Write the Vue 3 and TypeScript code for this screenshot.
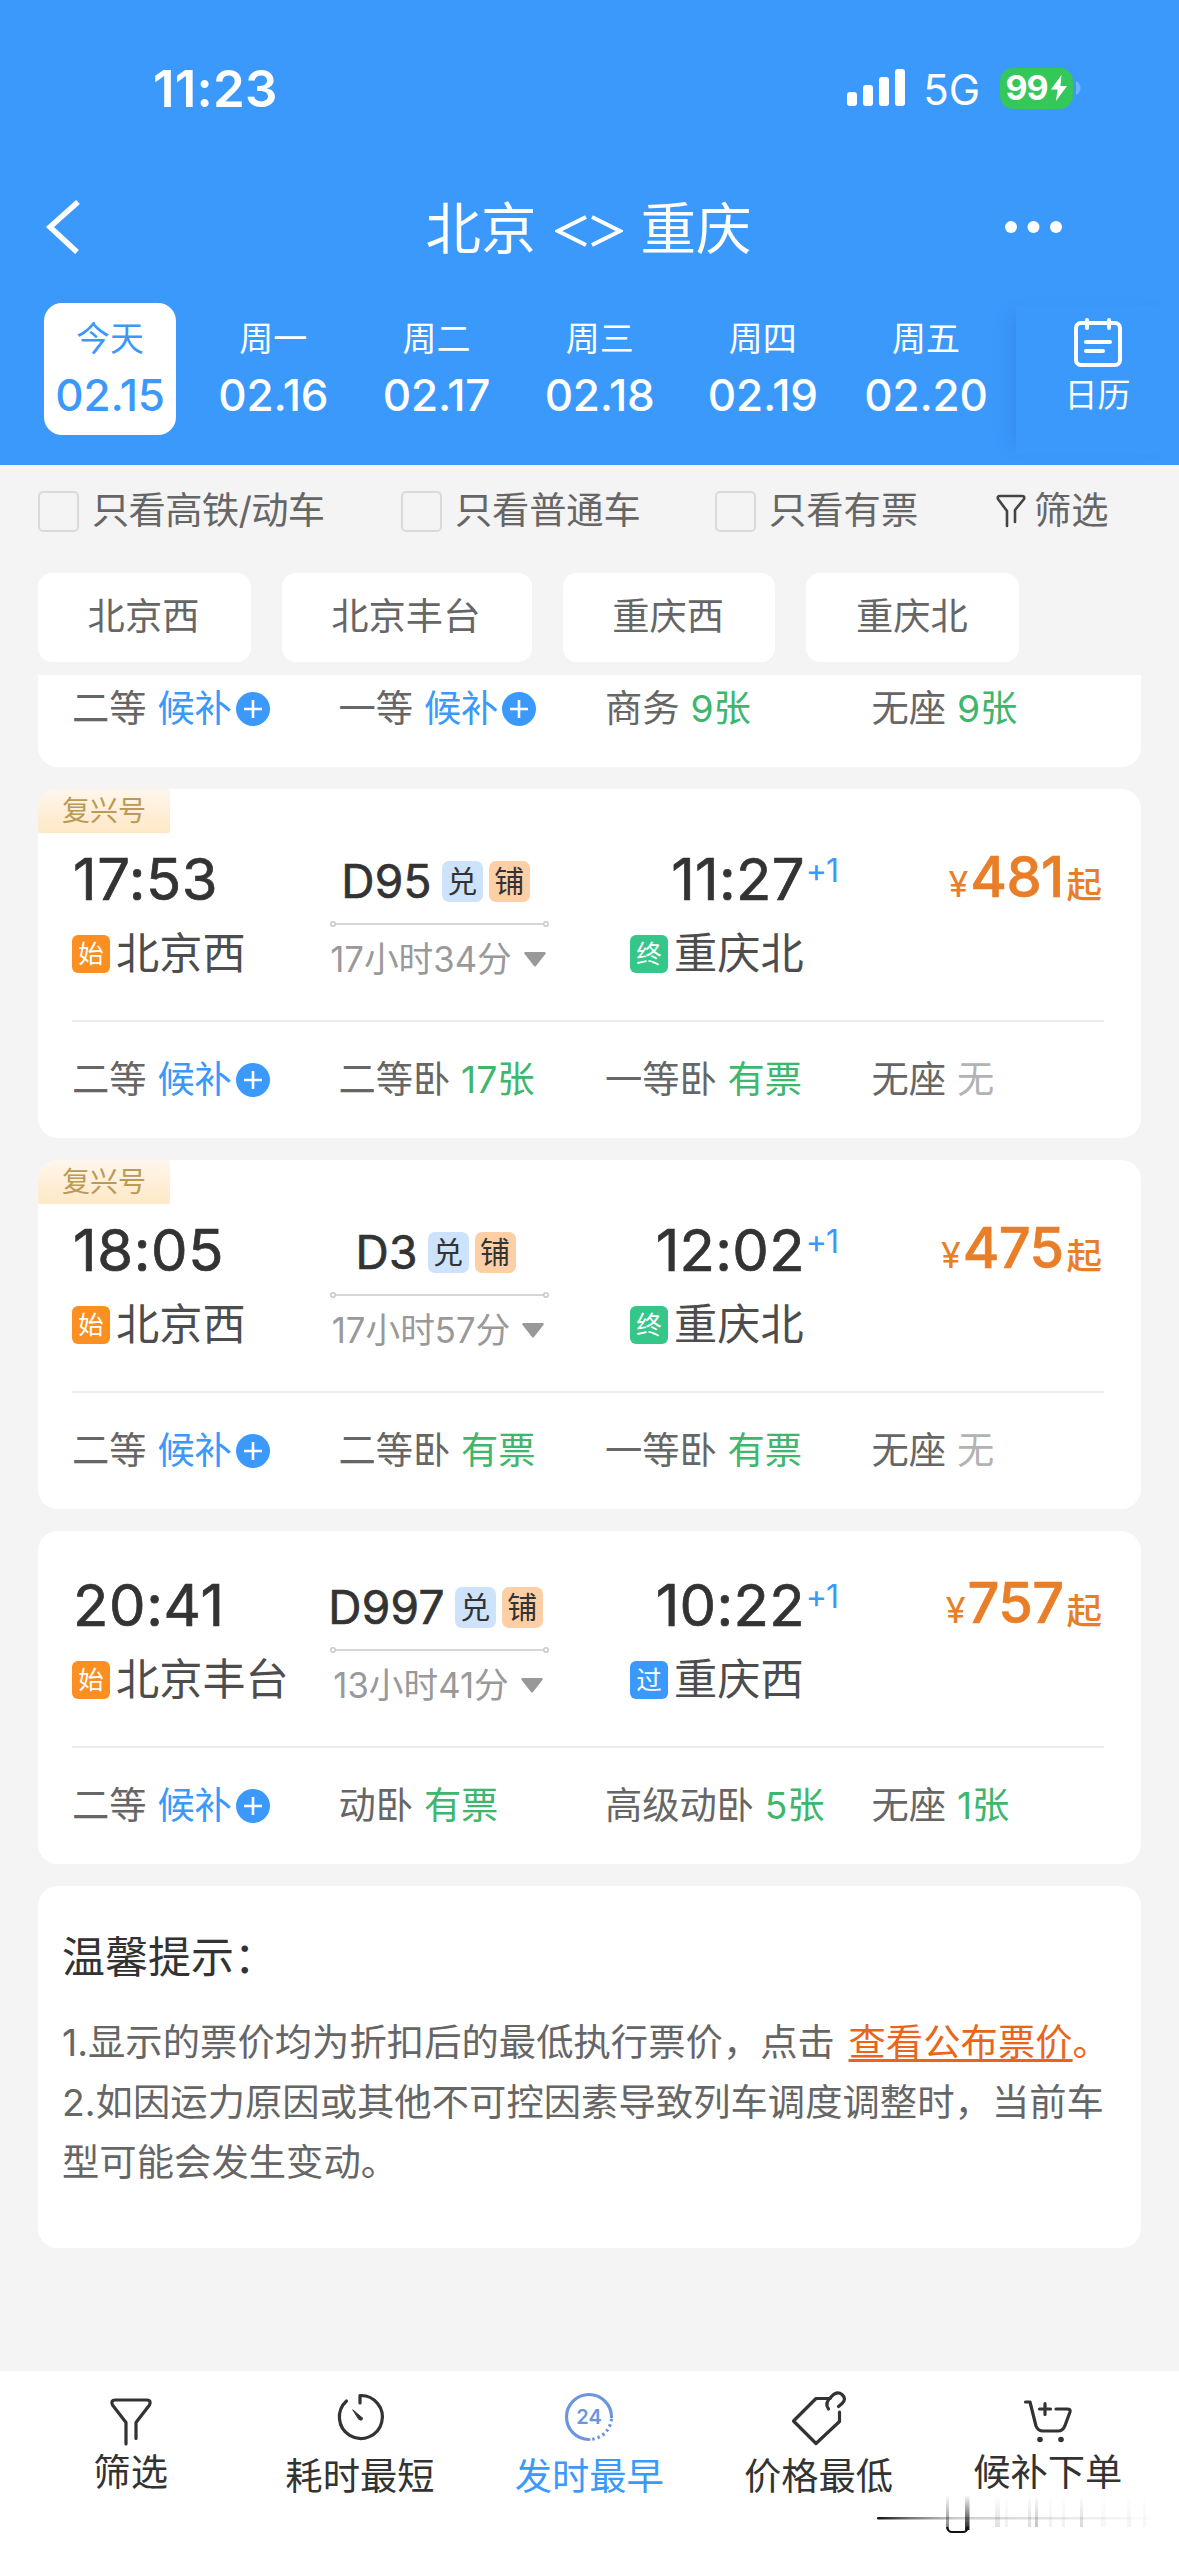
<script setup lang="ts">
interface Day { label: string; date: string }
interface Seat { name: string; value: string; kind: 'wait' | 'ok' | 'none' }
interface Train {
  fuxing: boolean
  depart: string
  from: string
  code: string
  duration: string
  arrive: string
  mark: '终' | '过'
  to: string
  price: string
  seats: Seat[]
}

const days: Day[] = [
  { label: '今天', date: '02.15' },
  { label: '周一', date: '02.16' },
  { label: '周二', date: '02.17' },
  { label: '周三', date: '02.18' },
  { label: '周四', date: '02.19' },
  { label: '周五', date: '02.20' },
]
const toggles: string[] = ['只看高铁/动车', '只看普通车', '只看有票']
const stations: string[] = ['北京西', '北京丰台', '重庆西', '重庆北']

const partial: Seat[] = [
  { name: '二等', value: '候补', kind: 'wait' },
  { name: '一等', value: '候补', kind: 'wait' },
  { name: '商务', value: '9张', kind: 'ok' },
  { name: '无座', value: '9张', kind: 'ok' },
]

const trains: Train[] = [
  {
    fuxing: true, depart: '17:53', from: '北京西', code: 'D95', duration: '17小时34分',
    arrive: '11:27', mark: '终', to: '重庆北', price: '481',
    seats: [
      { name: '二等', value: '候补', kind: 'wait' },
      { name: '二等卧', value: '17张', kind: 'ok' },
      { name: '一等卧', value: '有票', kind: 'ok' },
      { name: '无座', value: '无', kind: 'none' },
    ],
  },
  {
    fuxing: true, depart: '18:05', from: '北京西', code: 'D3', duration: '17小时57分',
    arrive: '12:02', mark: '终', to: '重庆北', price: '475',
    seats: [
      { name: '二等', value: '候补', kind: 'wait' },
      { name: '二等卧', value: '有票', kind: 'ok' },
      { name: '一等卧', value: '有票', kind: 'ok' },
      { name: '无座', value: '无', kind: 'none' },
    ],
  },
  {
    fuxing: false, depart: '20:41', from: '北京丰台', code: 'D997', duration: '13小时41分',
    arrive: '10:22', mark: '过', to: '重庆西', price: '757',
    seats: [
      { name: '二等', value: '候补', kind: 'wait' },
      { name: '动卧', value: '有票', kind: 'ok' },
      { name: '高级动卧', value: '5张', kind: 'ok' },
      { name: '无座', value: '1张', kind: 'ok' },
    ],
  },
]
</script>

<template>
  <div class="page">
    <header class="head">
      <div class="status">
        <span class="clock">11:23</span>
        <div class="status-right">
          <svg class="signal" width="58" height="38" viewBox="0 0 58 38" fill="#fff">
            <rect x="0" y="23" width="10" height="14" rx="3" />
            <rect x="16" y="16" width="10" height="21" rx="3" />
            <rect x="32" y="8" width="10" height="29" rx="3" />
            <rect x="48" y="0" width="10" height="37" rx="3" />
          </svg>
          <span class="net">5G</span>
          <span class="battery">
            <span class="pct">99</span>
            <svg width="18" height="26" viewBox="0 0 18 26" fill="#fff"><path d="M11.500 0 1 14.500h6.500L6 26 17 11h-6.600z" /></svg>
          </span>
          <svg class="nub" width="5" height="14" viewBox="0 0 5 14"><path d="M0 0c6 3 6 11 0 14z" fill="#6db4fd" /></svg>
        </div>
      </div>

      <div class="nav">
        <svg class="back" width="36" height="54" viewBox="0 0 36 54" fill="none" stroke="#fff" stroke-width="5.500"><path d="M33 2 5 27l27 25" /></svg>
        <h1>北京 <svg class="swap" width="68" height="34" viewBox="0 0 68 34" fill="none" stroke="#fff" stroke-width="4"><path d="M31 3 3 17l28 14M37 3l28 14-28 14" /></svg> 重庆</h1>
        <svg class="more" width="60" height="14" viewBox="0 0 60 14" fill="#fff"><circle cx="7" cy="7" r="6" /><circle cx="29.500" cy="7" r="6" /><circle cx="52" cy="7" r="6" /></svg>
      </div>

      <div class="dates">
        <div class="days">
          <div v-for="(d, i) in days" :key="d.date" class="day" :class="{ on: i === 0 }">
            <span class="dow">{{ d.label }}</span>
            <span class="dm">{{ d.date }}</span>
          </div>
        </div>
        <div class="cal">
          <svg width="48" height="50" viewBox="0 0 48 50" fill="none" stroke="#fff" stroke-width="4" stroke-linecap="round">
            <rect x="2" y="5" width="44" height="42" rx="5" />
            <path d="M13 2v8M35 2v8M12 24h24M12 33h17" />
          </svg>
          <span>日历</span>
        </div>
      </div>
    </header>

    <section class="filters">
      <label v-for="t in toggles" :key="t" class="toggle"><i class="box" />{{ t }}</label>
      <span class="pick">
        <svg width="30" height="34" viewBox="0 0 30 34" fill="none" stroke="#444" stroke-width="2.600" stroke-linecap="round" stroke-linejoin="round"><path d="M11 32V17L2 5Q1 2 4 2H26Q29 2 28 5L19 16V28" /></svg>筛选
      </span>
    </section>

    <section class="stations">
      <span v-for="s in stations" :key="s" class="chip">{{ s }}</span>
    </section>

    <main class="list">
      <article class="card cut">
        <div class="seats">
          <div v-for="s in partial" :key="s.name" class="seat">
            <span>{{ s.name }}</span><span :class="s.kind">{{ s.value }}</span>
            <svg v-if="s.kind === 'wait'" class="plus" width="34" height="34" viewBox="0 0 34 34"><circle cx="17" cy="17" r="17" fill="#3b99fc" /><path d="M17 8v18M8 17h18" stroke="#fff" stroke-width="2.600" /></svg>
          </div>
        </div>
      </article>

      <article v-for="t in trains" :key="t.code" class="card" :class="{ fx: t.fuxing }">
        <span v-if="t.fuxing" class="ribbon">复兴号</span>
        <div class="trip">
          <div class="dep">
            <div class="time">{{ t.depart }}</div>
            <div class="place"><b class="mark start">始</b>{{ t.from }}</div>
          </div>
          <div class="mid">
            <div class="code"><span>{{ t.code }}</span><b class="tag blue">兑</b><b class="tag orange">铺</b></div>
            <svg class="rail" width="219" height="12" viewBox="0 0 219 12" fill="#fff" stroke="#c8c8c8" stroke-width="1.500"><path d="M5 6H214" /><circle cx="3" cy="6" r="2.200" /><circle cx="216" cy="6" r="2.200" /></svg>
            <div class="dur"><span>{{ t.duration }}</span><svg width="22" height="15" viewBox="0 0 22 15" fill="#999"><path d="M1 0h20q1.500 1 0 2.500L12 14q-1 1-2 0L1 2.500Q-.5 1 1 0z" /></svg></div>
          </div>
          <div class="arr">
            <div class="time end">{{ t.arrive }}<sup>+1</sup></div>
            <div class="place"><b class="mark" :class="t.mark === '终' ? 'final' : 'pass'">{{ t.mark }}</b>{{ t.to }}</div>
          </div>
          <div class="price"><small>¥</small><strong>{{ t.price }}</strong><em>起</em></div>
        </div>
        <div class="seats">
          <div v-for="s in t.seats" :key="s.name" class="seat">
            <span>{{ s.name }}</span><span :class="s.kind">{{ s.value }}</span>
            <svg v-if="s.kind === 'wait'" class="plus" width="34" height="34" viewBox="0 0 34 34"><circle cx="17" cy="17" r="17" fill="#3b99fc" /><path d="M17 8v18M8 17h18" stroke="#fff" stroke-width="2.600" /></svg>
          </div>
        </div>
      </article>

      <article class="card notice">
        <h2>温馨提示：</h2>
        <p>1.显示的票价均为折扣后的最低执行票价，点击 <a><u>查看公布票价</u>。</a></p>
        <p>2.如因运力原因或其他不可控因素导致列车调度调整时，当前车<br>型可能会发生变动。</p>
      </article>
    </main>

    <footer class="tabs">
      <div class="tab">
        <svg width="54" height="56" viewBox="0 0 54 56"><path d="M22 48V26.500L8.500 9Q6.500 4 11 4H43Q47.500 4 45.500 9L32 26.500V42.500" /></svg>
        <span>筛选</span>
      </div>
      <div class="tab low">
        <svg width="54" height="56" viewBox="0 0 54 56"><path d="M27 9V1.500A21.500 21.500 0 1 1 13.500 7" /><path d="M20 16 30 24.500Q28.500 27.500 26 25.500Z" fill="#333" stroke-width="1" /></svg>
        <span>耗时最短</span>
      </div>
      <div class="tab low on">
        <svg width="54" height="56" viewBox="0 0 54 56">
          <path d="M49.500 23A22.500 22.500 0 1 0 27 45.500" />
          <path d="M49.500 25A22.500 22.500 0 0 1 29 45.400" stroke-dasharray="2.500 3" stroke-linecap="butt" />
          <text x="27" y="30" text-anchor="middle">24</text>
        </svg>
        <span>发时最早</span>
      </div>
      <div class="tab low">
        <svg width="54" height="56" viewBox="0 0 54 56"><path d="M38 4.500H24L1.500 27 24 49.500 47.500 27.500V18" /><path d="M36.500 15C33 10.500 35 6.500 39.500 2.500Q45-3.500 50 .5Q55 5 50 9.500L46.500 12.500" /></svg>
        <span>价格最低</span>
      </div>
      <div class="tab">
        <svg width="54" height="56" viewBox="0 0 54 56"><path d="M4.500 6H9L15 30Q17 35 22 35H37Q42 35 44 29.500L49 16Q50 13 46 13H35M24 7.500v11M18.500 13h11" /><circle cx="19" cy="43.500" r="2.800" fill="#333" stroke="none" /><circle cx="40" cy="43.500" r="2.800" fill="#333" stroke="none" /></svg>
        <span>候补下单</span>
      </div>
      <svg class="streak" width="290" height="46" viewBox="0 0 290 46">
        <defs>
          <linearGradient id="h"><stop offset="0" stop-color="#111" /><stop offset=".12" stop-color="#777" /><stop offset=".28" stop-color="#ccc" /><stop offset="1" stop-color="#fff" /></linearGradient>
          <linearGradient id="v" x2="0" y2="1"><stop offset="0" stop-color="#111" stop-opacity="0" /><stop offset="1" stop-color="#111" /></linearGradient>
        </defs>
        <rect x="0" y="22" width="280" height="2.400" rx="1.200" fill="url(#h)" />
        <rect x="69" y="0" width="3" height="34" fill="url(#v)" opacity=".55" />
        <rect x="88" y="0" width="4.500" height="35" fill="url(#v)" opacity=".95" />
        <path d="M70 32q1 5 5 5h11q4 0 5-5" fill="none" stroke="#111" stroke-width="2" />
        <g fill="url(#v)">
          <rect x="118" y="0" width="5" height="32" opacity=".13" />
          <rect x="128" y="0" width="3" height="32" opacity=".06" />
          <rect x="151" y="0" width="3" height="32" opacity=".15" />
          <rect x="158" y="0" width="3" height="32" opacity=".25" />
          <rect x="172" y="0" width="3" height="32" opacity=".06" />
          <rect x="185" y="0" width="3" height="32" opacity=".06" />
          <rect x="203" y="0" width="3" height="32" opacity=".16" />
          <rect x="224" y="0" width="5" height="32" opacity=".04" />
          <rect x="250" y="0" width="4" height="32" opacity=".05" />
          <rect x="266" y="0" width="3" height="32" opacity=".04" />
        </g>
      </svg>
    </footer>
  </div>
</template>

<style>
body { background: #f4f4f4; }
</style>

<style scoped>
.page {
  width: 1179px; height: 2556px; overflow: hidden; box-sizing: border-box;
  display: flex; flex-direction: column; background: #f4f4f4; color: #666;
  font-family: Inter, "Noto Sans CJK SC", sans-serif; font-size: 37.300px; line-height: 1;
}
svg { flex: none; display: block; }
.head { height: 465px; background: #3b99fc; color: #fff; display: flex; flex-direction: column; flex: none; }
.status { height: 176px; display: flex; align-items: center; justify-content: space-between; padding: 0 98px 0 153px; box-sizing: border-box; }
.clock { font-size: 51px; font-weight: 600; letter-spacing: 0.200px; }
.status-right { display: flex; align-items: center; }
.net { font-size: 42px; margin: 3px 20px 0 18px; }
.battery { width: 73px; height: 41px; border-radius: 13px; background: #34c759; display: flex; align-items: center; justify-content: center; gap: 2px; }
.pct { font-size: 34px; font-weight: 700; letter-spacing: -1px; }
.nub { margin-left: 3px; }
.nav { height: 102px; display: grid; grid-template-columns: 200px 1fr 200px; align-items: center; }
.back { margin-left: 45px; }
.nav h1 { margin: 4px 0 0 -2px; font-size: 55.500px; font-weight: 400; display: flex; justify-content: center; align-items: center; gap: 18px; line-height: 80px; }
.swap { margin-top: 3px; }
.more { margin-left: 25px; }
.dates { height: 187px; display: flex; padding-left: 28.500px; }
.days { display: flex; width: 987.500px; }
.day { width: 132px; height: 132px; margin: 25px 15.600px 0; display: flex; flex-direction: column; align-items: center; border-radius: 18px; flex: none; }
.day.on { background: #fff; color: #4a96df; }
.dow { font-size: 34px; line-height: 40px; margin-top: 16px; }
.dm { font-size: 44px; font-weight: 500; letter-spacing: -0.200px; line-height: 50px; margin-top: 11px; white-space: nowrap; }
.cal { flex: 1; height: 148px; margin-top: 28px; display: flex; flex-direction: column; align-items: center; font-size: 33px; box-shadow: -14px 0 16px -8px rgba(30, 90, 170, .18); }
.cal svg { margin-top: 12px; }
.cal span { line-height: 40px; margin-top: 7px; }
.filters { height: 92px; flex: none; display: flex; align-items: center; padding-left: 38px; }
.toggle { display: flex; align-items: center; white-space: nowrap; margin-right: 75px; line-height: 44px; flex: none; }
.toggle:nth-child(1) { width: 288px; letter-spacing: -0.700px; }
.toggle:nth-child(2) { width: 239px; letter-spacing: -0.200px; }
.toggle:nth-child(3) { width: 206px; }
.box { flex: none; width: 37px; height: 37px; border: 2px solid #dadada; border-radius: 5px; margin-right: 13px; }
.pick { display: flex; align-items: center; gap: 8px; white-space: nowrap; }
.stations { display: flex; gap: 31px; padding: 16px 38px 0; flex: none; height: 102px; }
.chip { height: 89px; line-height: 87px; padding: 0 51.200px 0 49.600px; background: #fff; border-radius: 14px; }
.list { padding: 0 38px; flex: 1; display: flex; flex-direction: column; gap: 22px; }
.card { position: relative; background: #fff; border-radius: 20px; flex: none; }
.cut { height: 92px; border-radius: 0 0 20px 20px; }
.cut .seats { height: 68px; border: 0; }
.ribbon { position: absolute; left: 0; top: 0; width: 132px; height: 44px; line-height: 44px; box-sizing: border-box; padding-left: 24px; font-size: 28px; color: #bb9a55; white-space: nowrap; background: linear-gradient(#fff6ec, #fee8c6); border-radius: 20px 2px 2px 2px; }
.trip { display: grid; grid-template-columns: 258px 219px 289px 1fr; margin: 0 37px 0 34px; height: 215px; padding-top: 44px; box-sizing: border-box; }
.fx .trip { height: 231px; padding-top: 60px; }
.arr { margin-left: 81px; width: 208px; }
.time { height: 60px; line-height: 60px; font-size: 58px; color: #333; font-weight: 400; letter-spacing: 0.600px; white-space: nowrap; -webkit-text-stroke: 0.700px #333; }
.dep .time { padding-left: 1px; }
.end { display: flex; justify-content: flex-end; letter-spacing: 0.300px; }
.time sup { font-size: 32px; line-height: 44px; color: #3b99fc; font-weight: 400; margin-left: 1px; letter-spacing: -1px; -webkit-text-stroke: 0; }
.place { height: 60px; margin-top: 15px; display: flex; align-items: center; font-size: 43.200px; color: #4d4d4d; white-space: nowrap; }
.mark { width: 38px; height: 38px; border-radius: 6px; font-size: 25.500px; line-height: 37px; text-align: center; color: #fff; font-weight: 400; margin-right: 6px; }
.start { background: #fb8f22; }
.final { background: #35c68a; }
.pass { background: #3b99fc; }
.mid { display: flex; flex-direction: column; align-items: center; }
.code { height: 64px; display: flex; align-items: center; color: #333; font-size: 46px; font-weight: 400; margin-left: -8px; }
.code span { -webkit-text-stroke: 0.700px #333; letter-spacing: 0.300px; }
.tag { width: 41px; height: 41px; border-radius: 7px; line-height: 40px; text-align: center; font-size: 30px; font-weight: 400; margin-left: 6px; }
.blue { background: #cde3fc; margin-left: 10px; }
.orange { background: #fdcfa6; }
.rail { margin-top: 5px; }
.dur { height: 40px; margin: 9px 0 0 -3px; display: flex; align-items: center; font-size: 34.700px; color: #999; white-space: nowrap; gap: 12px; }
.price { height: 60px; display: flex; justify-content: flex-end; align-items: baseline; color: #e97e29; white-space: nowrap; line-height: 56px; margin-right: 2px; }
.price small { font-size: 36px; }
.price strong { font-size: 56px; font-weight: 500; letter-spacing: -0.700px; margin: 0 3px 0 2px; -webkit-text-stroke: 0.600px #e97e29; }
.price em { font-style: normal; font-weight: 500; font-size: 35.500px; position: relative; top: 1px; }
.seats { display: grid; grid-template-columns: 266.500px 266.500px 266.500px 1fr; margin: 0 37px 0 34px; height: 117px; box-sizing: border-box; border-top: 2px solid #ececec; }
.card:not(.cut) .seats { margin-bottom: 1px; }
.seat { display: flex; align-items: center; white-space: nowrap; letter-spacing: -0.100px; }
.seat span + span { margin-left: 11px; }
.wait { color: #3b99fc; }
.ok { color: #3eb66c; }
.none { color: #b3b3b3; }
.plus { margin-left: 4px; }
.notice { height: 362px; box-sizing: border-box; padding: 41px 0 0 24px; }
.notice h2 { margin: 0 0 26px; font-size: 43px; line-height: 60px; font-weight: 400; color: #333; }
.notice p { margin: 0; line-height: 60px; white-space: nowrap; word-spacing: 3px; letter-spacing: 0.050px; }
.notice a { color: #e8651b; }
.notice u { text-decoration-thickness: 3px; text-underline-offset: 3px; }
.tabs { position: relative; height: 185px; flex: none; background: #fff; display: grid; grid-template-columns: repeat(5, 229.300px); padding-left: 16px; box-sizing: border-box; color: #333; }
.tab { display: flex; flex-direction: column; align-items: center; padding-top: 25px; line-height: 46px; }
.tab svg { fill: none; stroke: #333; stroke-width: 3.200; stroke-linecap: round; stroke-linejoin: round; overflow: visible; }
.tab span { margin-top: -2px; }
.low { padding-top: 23px; }
.low span { margin-top: 4px; }
.on span { color: #3b99fc; }
.on svg { stroke: #6c95e0; }
.tab text { font-size: 20px; font-weight: 600; fill: #6c95e0; stroke: none; }
.streak { position: absolute; left: 877px; top: 124px; }
</style>
